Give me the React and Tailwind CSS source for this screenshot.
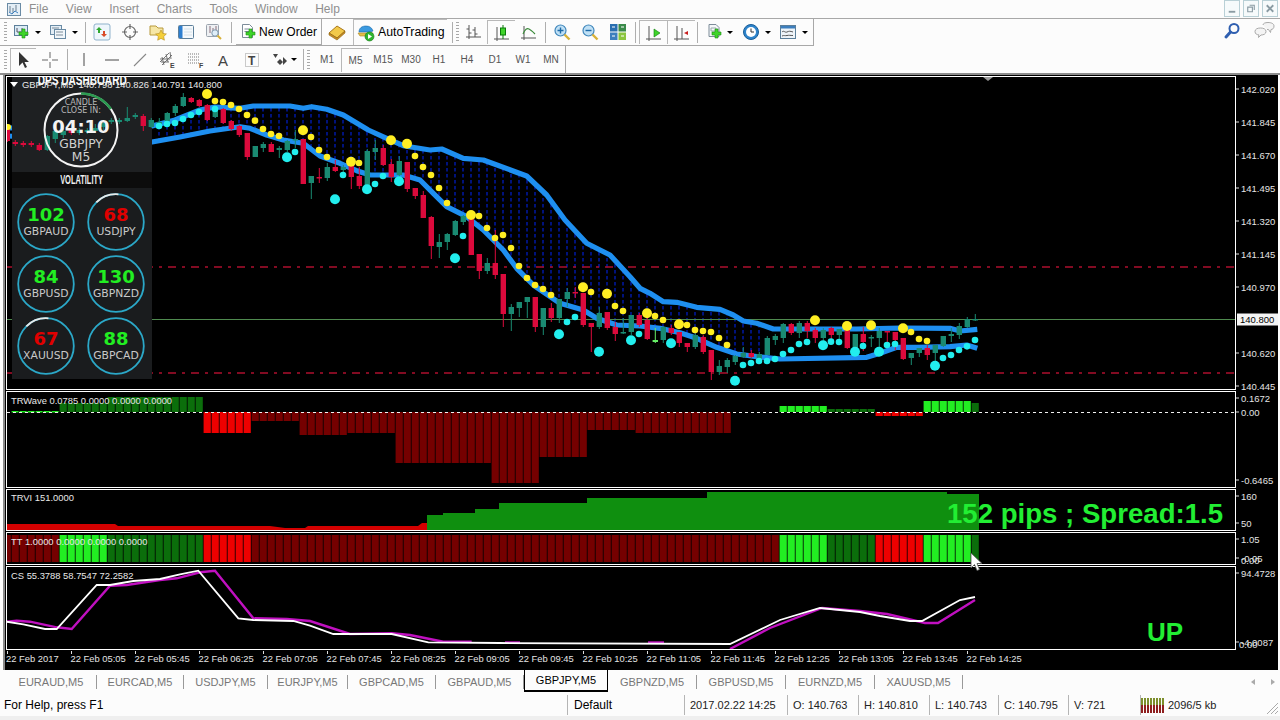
// App.jsx - MT4 terminal screenshot
const z4 = (pts) => pts.map(([x, y]) => [240 + x / 3, 80 + y / 3]);
const z5 = (pts) => pts.map(([x, y]) => [640 + x / 3, 260 + y / 3]);
const toPath = (pts) => pts.map(([x, y]) => `${x.toFixed(1)},${y.toFixed(1)}`).join(" ");

// body top, body bottom, wick top, wick bottom, colour - one per bar, 8px apart
const candles = [
  [126,141,125,142,"r"],[142,144,140,146,"r"],[143,145,141,147,"r"],[143,145,141,147,"r"],[145,150,143,151,"r"],
  [136,150,135,151,"g"],[131,139,130,143,"g"],[131,135,128,138,"g"],[129,133,128,135,"r"],[130,133,128,135,"g"],
  [130,132,128,134,"g"],[128,131,124,133,"g"],[123,127,120,130,"g"],[120,122,118,124,"g"],[120,122,118,124,"g"],
  [118,121,107,122,"g"],[115,117,113,119,"g"],[116,126,114,131,"r"],[120,127,118,128,"g"],[122,126,118,128,"g"],
  [113,121,112,125,"g"],[106,113,104,116,"g"],[97,106,93,107,"g"],[98,102,97,103,"r"],[100,106,99,107,"r"],
  [105,120,104,121,"r"],[109,117,108,118,"g"],[109,123,108,124,"r"],[121,129,120,131,"r"],[126,135,125,137,"r"],
  [133,157,133,160,"r"],[146,157,146,157,"g"],[144,148,142,152,"g"],[144,152,142,152,"r"],[148,150,146,158,"g"],
  [141,150,140,152,"g"],[139,140,130,148,"g"],[139,184,139,184,"r"],[176,183,176,199,"g"],[177,178,168,183,"r"],
  [167,178,163,181,"g"],[167,171,160,172,"r"],[167,170,165,178,"g"],[165,177,165,189,"r"],[176,186,167,189,"r"],
  [151,186,149,186,"g"],[148,152,140,160,"g"],[148,165,145,166,"r"],[164,177,159,182,"r"],[161,175,156,179,"g"],
  [162,189,162,192,"r"],[188,196,188,199,"r"],[195,218,191,218,"r"],[217,246,216,259,"r"],[242,247,234,258,"g"],
  [234,242,233,250,"g"],[221,235,220,236,"g"],[216,222,215,225,"g"],[218,255,212,255,"r"],[254,271,254,279,"r"],
  [263,271,258,274,"g"],[263,275,230,279,"r"],[274,314,274,327,"r"],[307,314,304,331,"g"],[302,308,302,317,"g"],
  [297,302,297,318,"g"],[297,327,297,332,"r"],[308,327,308,335,"g"],[308,318,303,322,"r"],[299,318,299,323,"g"],
  [292,299,288,307,"g"],[292,293,287,298,"r"],[293,325,293,327,"r"],[323,327,323,352,"r"],[313,327,307,329,"g"],
  [312,328,312,330,"r"],[327,334,322,341,"r"],[332,333,318,334,"g"],[315,332,315,335,"g"],[315,325,313,327,"r"],
  [320,339,313,340,"r"],[340,342,328,343,"l"],[327,340,326,343,"g"],[328,333,325,335,"r"],[332,343,332,347,"r"],
  [343,347,343,352,"r"],[335,347,332,349,"g"],[337,352,335,354,"r"],[350,372,350,380,"r"],[366,372,360,375,"g"],
  [360,367,358,373,"g"],[356,362,355,365,"g"],[353,357,347,358,"g"],[353,357,350,358,"r"],[354,363,352,364,"g"],
  [338,355,336,355,"g"],[336,340,334,345,"g"],[324,338,323,343,"g"],[324,333,323,335,"r"],[323,333,321,338,"g"],
  [323,331,321,338,"r"],[330,338,328,343,"r"],[330,338,328,348,"g"],[328,335,327,343,"r"],[329,335,329,340,"g"],
  [330,348,330,349,"r"],[334,348,334,353,"g"],[334,342,327,351,"r"],[337,338,335,347,"g"],[331,338,328,347,"g"],
  [331,332,331,343,"r"],[332,340,332,350,"r"],[338,359,338,360,"r"],[353,358,353,365,"g"],[348,353,348,357,"g"],
  [348,355,345,360,"r"],[345,353,345,366,"g"],[336,346,336,347,"g"],[334,336,328,342,"g"],[326,335,323,339,"g"],
  [319,327,317,328,"g"],[319,320,314,321,"g"],
];
const candleColor = { r: "#dc0a3c", g: "#1a8a72", l: "#66ee66" };

const upperBand = [
  [7,128],[152,126],[175,120],[200,110],[215,107],
  ...z4([[0,85],[40,78],[150,78],[190,85],[215,80],[260,88],[310,105],[385,150],[440,175],[490,197],[570,210],[605,207],[670,235],[730,240],[860,288],[920,345],[975,420],[1040,490],[1110,525],[1170,590]]),
  ...z5([[0,85],[30,100],[70,125],[110,127],[170,142],[240,148],[280,165],[310,183],[350,190],[400,207],[650,207],[780,204],[930,205],[960,213],[1012,208]]),
];
const lowerBand = [
  [7,136],[152,142],[180,137],[210,131],
  ...z4([[0,140],[30,145],[80,165],[130,180],[190,190],[240,228],[300,250],[350,272],[390,285],[490,285],[540,300],[580,340],[620,380],[680,410],[730,450],[790,510],[830,565],[880,615],[960,670],[1030,690],[1070,715],[1130,735]]),
  ...z5([[0,198],[60,205],[120,218],[170,235],[230,262],[290,282],[350,290],[420,297],[680,292],[720,280],[770,262],[830,262],[930,260],[980,255],[1012,265]]),
];

const yellowSmall = [
  [215,101],[223,102],[231,105],[239,109],
  ...z4([[21,105],[45,122],[69,147],[93,162],[117,168],[213,171],[237,210],[261,231],[357,249],[525,228],[549,261],[573,285],[597,324],[621,369],[717,408],[741,444],[765,474],[789,465],[813,504],[837,558],[861,594],[885,615],[909,627],[933,645],[1053,636],[1125,678],[1149,693]]),
  ...z5([[45,168],[69,180],[141,195],[165,210],[189,213],[213,216],[237,234],[261,255],[813,216],[837,237],[861,243]]),
];
const yellowBig = [
  [207,94],
  ...z4([[189,151],[333,245],[453,181],[501,191],[693,405],[1029,622],[1101,641]]),
  ...z5([[21,160],[117,193],[525,181],[621,198],[693,196],[789,205]]),
];
const cyanSmall = [
  [159,126],[167,124],[175,123],[183,119],[191,115],[199,112],[215,109],
  ...z4([[165,216],[309,285],[405,312],[429,288],[669,468],[981,726],[1005,711],[1197,762]]),
  ...z5([[309,315],[333,309],[357,303],[381,303],[405,297],[429,282],[453,270],[477,252],[501,246],[573,245],[597,246],[669,258],[741,255],[765,252],[909,294],[933,285],[957,270],[981,259],[1005,240]]),
];
const cyanBig = [
  ...z4([[141,232],[285,358],[381,328],[477,304],[645,535],[957,763],[1077,815],[1173,781]]),
  ...z5([[93,250],[285,362],[549,256],[645,275],[717,275],[885,317]]),
];

const BG = "#22ee22", DG = "#0b6e0b", BR = "#ee0000", DR = "#750000";
const barX = (i) => 3.6 + 8 * i;
const range = (a, b) => Array.from({ length: b - a + 1 }, (_, k) => a + k);

// TRWave histogram: bar range, top, bottom, colour
const waveRuns = [
  [7, 12, 403, 412, DG], [13, 24, 397, 412, DG], [25, 30, 412, 433, BR], [31, 36, 412, 421, DR],
  [37, 42, 412, 435, DR], [43, 48, 412, 433, DR], [49, 60, 412, 463, DR], [61, 66, 412, 483, DR],
  [67, 72, 412, 457, DR], [73, 78, 412, 430, DR], [79, 90, 412, 433, DR], [97, 102, 406, 412, BG],
  [103, 108, 409, 412, DG], [109, 114, 412, 416, BR], [115, 120, 401, 412, BG], [121, 121, 403, 412, DG],
];
const ttRuns = [
  [0, 6, DR], [7, 12, BG], [13, 24, DG], [25, 30, BR], [31, 96, DR],
  [97, 102, BG], [103, 108, DG], [109, 114, BR], [115, 120, BG], [121, 121, DG],
];

const csWhite = [
  ...[[20,170],[70,178],[135,192],[170,192],[290,60],[330,60],[400,48],[480,42],[540,28],[595,17],[715,160],[760,165],[880,168],[930,182],[1000,207],[1175,207],[1285,232],[1500,234]].map(([x, y]) => [x / 3, 565 + y / 3]),
  [730,644],[780,620],[820,608],[860,612],[880,616],[910,621],[922,621],[960,600],[975,597],
];
const csPurple = [
  [...[[20,170],[50,167],[90,170],[170,187],[215,192],[330,62],[380,60],[480,45],[530,40],[600,22],[645,17],[760,160],[860,162],[930,168],[1050,207],[1175,205],[1230,210],[1330,230],[1415,230]].map(([x, y]) => [x / 3, 565 + y / 3])],
  [[505,642.5],[520,642.5]],
  [[648,642.5],[664,642.5]],
  [[730,649],[770,628],[822,608],[860,611],[887,614],[925,623],[938,623],[975,600]],
];

const timeLabels = ["05:05","05:45","06:25","07:05","07:45","08:25","09:05","09:45","10:25","11:05","11:45","12:25","13:05","13:45","14:25"];
const priceLabels = [["142.020",89],["141.845",122],["141.670",155],["141.495",188],["141.320",221],["141.145",254],["140.970",287],["140.620",353],["140.445",386]];

const arc = (c, r, a0, a1) => {
  const pt = (a) => [c + r * Math.sin((a * Math.PI) / 180), c - r * Math.cos((a * Math.PI) / 180)];
  const [x0, y0] = pt(a0);
  const [x1, y1] = pt(a1);
  return `M${x0} ${y0} A${r} ${r} 0 0 1 ${x1} ${y1}`;
};

function Candles({ from = 0, to = candles.length - 1 }) {
  return (
    <>
      {range(from, to).map((i) => {
        const [t, b, wt, wb, c] = candles[i];
        const x = 7.3 + 8 * i;
        return (
          <g key={i} fill={candleColor[c]}>
            <rect x={x - 0.5} y={wt} width="1" height={wb - wt} />
            <rect x={x - 2.7} y={t} width="5.4" height={Math.max(b - t, 1.5)} />
          </g>
        );
      })}
    </>
  );
}

function Pane({ className, top, height, axis, overlay, children }) {
  return (
    <div className={`flex shrink-0 ${className}`}>
      <div className="relative w-[1230px] border border-white overflow-hidden">
        <svg className="block w-full h-full" viewBox={`7 ${top + 1} 1228 ${height - 2}`}>
          {children}
        </svg>
        {overlay}
      </div>
      <svg className="block w-[42px] h-full overflow-visible" viewBox={`1236 ${top} 42 ${height}`}>
        {axis}
      </svg>
    </div>
  );
}

function AxisLabel({ y, children }) {
  return (
    <g>
      <rect x="1236" y={y - 0.5} width="3" height="1" fill="#ddd" />
      <text x="1241" y={y + 3.5} fontSize="9.5" fill="#e4e4e4">{children}</text>
    </g>
  );
}

function Gauge({ value, label, color, spent }) {
  return (
    <div className="relative w-[58px] h-[58px] flex flex-col items-center justify-center">
      <svg className="absolute inset-0" viewBox="0 0 58 58" fill="none">
        <circle cx="29" cy="29" r="27.8" stroke="#2ba8c8" strokeWidth="1.8" />
        {spent && <path d={arc(29, 27.8, -45, 5)} stroke="#e8e8e8" strokeWidth="1.8" />}
      </svg>
      <div className={`font-['DejaVu_Sans',sans-serif] font-bold text-[18px] leading-[20px] -mt-px ${color}`}>{value}</div>
      <div className="font-['DejaVu_Sans',sans-serif] text-[10.8px] leading-[13px] text-[#c8c8c8]">{label}</div>
    </div>
  );
}

function DashPanel() {
  return (
    <div className="absolute left-[5px] top-0 w-[140px] flex flex-col">
      <div className="relative h-[95px] bg-[#1e2022] overflow-hidden flex flex-col items-center">
        <svg className="absolute inset-0 w-full h-full" viewBox="12 77 140 95">
          <Candles from={1} to={18} />
        </svg>
        <div className="relative h-[16px] -mt-[5px] font-bold text-[15px] leading-[16px] text-white scale-x-[0.67] whitespace-nowrap">DPS DASHBOARD</div>
        <div className="relative w-[76px] h-[76px] mt-[4px] -ml-[2px] flex flex-col items-center font-['DejaVu_Sans',sans-serif]">
          <svg className="absolute inset-0" viewBox="0 0 76 76" fill="none">
            <circle cx="38" cy="38" r="36.5" stroke="#f4f4f4" strokeWidth="2" />
            <path d={arc(38, 36.5, 0, 55)} stroke="#2b9a50" strokeWidth="2.5" />
          </svg>
          <div className="relative mt-[7px] text-[8px] leading-[8px] text-[#b8b8b8] text-center">CANDLE<br />CLOSE IN:</div>
          <div className="relative text-[18px] leading-[19px] mt-[2px] font-bold text-[#f4f4f4]">04:10</div>
          <div className="relative text-[12.3px] leading-[13px] mt-[2px] text-[#d0d0d0] text-center">GBPJPY<br />M5</div>
        </div>
      </div>
      <div className="h-[16px] bg-[#0c0c0c] flex items-center justify-center">
        <span className="font-bold text-[12px] text-[#eee] scale-x-[0.62] whitespace-nowrap">VOLATILITY</span>
      </div>
      <div className="h-[191px] bg-[#1a1c1e] grid grid-cols-[58px_58px] gap-x-[12px] gap-y-[4px] content-start pl-[5px] pt-[5px]">
        <Gauge value="102" label="GBPAUD" color="text-[#22ee22]" />
        <Gauge value="68" label="USDJPY" color="text-[#e00000]" spent />
        <Gauge value="84" label="GBPUSD" color="text-[#22ee22]" />
        <Gauge value="130" label="GBPNZD" color="text-[#22ee22]" />
        <Gauge value="67" label="XAUUSD" color="text-[#e00000]" spent />
        <Gauge value="88" label="GBPCAD" color="text-[#22ee22]" />
      </div>
    </div>
  );
}

function MainChart() {
  const bandArea = toPath([...upperBand, ...[...lowerBand].reverse()]);
  return (
    <Pane
      className="h-[314px]"
      top={76}
      height={314}
      overlay={
        <>
          <DashPanel />
          <div className="absolute left-[3px] top-[2px] flex items-center gap-[3px] text-[9.4px] leading-[11px] text-[#e8e8e8] whitespace-nowrap">
            <span className="w-0 h-0 border-x-[4px] border-x-transparent border-t-[5px] border-t-white" />
            <span className="ml-[1px]">GBPJPY,M5 &nbsp;140.798 140.826 140.791 140.800</span>
          </div>
        </>
      }
      axis={
        <>
          {priceLabels.map(([t, y]) => <AxisLabel key={t} y={y}>{t}</AxisLabel>)}
          <rect x="1237" y="313.5" width="41" height="12" fill="#f4f4f4" />
          <text x="1240" y="323" fontSize="9.5" fill="#000">140.800</text>
        </>
      }
    >
      <defs>
        <pattern id="cloud" x="3" y="0" width="8" height="6" patternUnits="userSpaceOnUse">
          <rect x="3" y="0" width="2" height="3.5" fill="#00127c" />
        </pattern>
        <clipPath id="cloudClip"><rect x="7" y="76" width="757" height="300" /></clipPath>
      </defs>
      <polygon points={bandArea} fill="url(#cloud)" clipPath="url(#cloudClip)" />
      <line x1="7" x2="1235" y1="267" y2="267" stroke="#ad0f2e" strokeWidth="1.5" strokeDasharray="8 6 3 6" />
      <line x1="7" x2="1235" y1="373" y2="373" stroke="#ad0f2e" strokeWidth="1.5" strokeDasharray="8 6 3 6" />
      <line x1="7" x2="1235" y1="319.5" y2="319.5" stroke="#4f8a4f" strokeWidth="1" />
      <polygon points="983,77 993,77 988,81" fill="#9a9a9a" />
      <polyline points={toPath(lowerBand)} fill="none" stroke="#1e8ff0" strokeWidth="5.2" strokeLinejoin="round" />
      <polyline points={toPath(upperBand)} fill="none" stroke="#1e8ff0" strokeWidth="5.2" strokeLinejoin="round" />
      <Candles />
      {yellowSmall.map(([x, y], i) => <circle key={i} cx={x} cy={y} r="3.3" fill="#ffee22" />)}
      {yellowBig.map(([x, y], i) => <circle key={i} cx={x} cy={y} r="5" fill="#ffee22" />)}
      {cyanSmall.map(([x, y], i) => <circle key={i} cx={x} cy={y} r="3.3" fill="#22eeee" />)}
      {cyanBig.map(([x, y], i) => <circle key={i} cx={x} cy={y} r="5" fill="#22eeee" />)}
      <circle cx="8" cy="127" r="3" fill="#ffee22" />
    </Pane>
  );
}

function WavePane() {
  return (
    <Pane
      className="h-[97px]"
      top={391}
      height={97}
      axis={
        <>
          <AxisLabel y={398}>0.1672</AxisLabel>
          <AxisLabel y={412}>0.00</AxisLabel>
          <AxisLabel y={480}>-0.6465</AxisLabel>
        </>
      }
    >
      {waveRuns.flatMap(([a, b, t, bt, c]) => range(a, b).map((i) => (
        <rect key={i} x={barX(i)} y={t} width="7.2" height={bt - t} fill={c} />
      )))}
      {range(1, 6).map((i) => <rect key={i} x={barX(i)} y="411" width="7" height="1.5" fill={BG} />)}
      <line x1="7" x2="1235" y1="412.5" y2="412.5" stroke="#f0f0f0" strokeDasharray="3 3" />
      <text x="11" y="404" fontSize="9.4" fill="#e8e8e8">TRWave 0.0785 0.0000 0.0000 0.0000</text>
    </Pane>
  );
}

function ViPane() {
  return (
    <Pane
      className="h-[42px]"
      top={489}
      height={42}
      axis={
        <>
          <AxisLabel y={496}>160</AxisLabel>
          <AxisLabel y={523}>50</AxisLabel>
        </>
      }
    >
      <polygon points="7,531 7,524 115,524 118,526 270,526 285,528 305,528 308,526 418,526 422,523 427,523 427,531" fill="#d40000" />
      <polygon points="427,531 427,515 443,515 443,513 475,513 475,509 499,509 499,503 587,503 587,498 707,498 707,492 947,492 947,494 979,494 979,531" fill="#0f8f0f" />
      <text x="11" y="501" fontSize="9.4" fill="#e8e8e8">TRVI 151.0000</text>
      <text x="947" y="523" fontSize="27.6" fontWeight="bold" fill="#22ee33">152 pips ; Spread:1.5</text>
    </Pane>
  );
}

function TtPane() {
  return (
    <Pane
      className="h-[33px]"
      top={532}
      height={33}
      axis={
        <>
          <AxisLabel y={539}>1.05</AxisLabel>
          <AxisLabel y={558}>-0.05</AxisLabel>
          <text x="1241" y="564" fontSize="9.5" fill="#e4e4e4">0.00</text>
        </>
      }
    >
      {ttRuns.flatMap(([a, b, c]) => range(a, b).map((i) => (
        <rect key={i} x={barX(i)} y="535" width="7.2" height="27" fill={c} />
      )))}
      <text x="11" y="545" fontSize="9.4" fill="#e8e8e8">TT 1.0000 0.0000 0.0000 0.0000</text>
    </Pane>
  );
}

function CsPane() {
  return (
    <Pane
      className="h-[84px]"
      top={566}
      height={84}
      axis={
        <>
          <AxisLabel y={573}>94.4728</AxisLabel>
          <AxisLabel y={642}>-4.0087</AxisLabel>
          <text x="1239" y="648" fontSize="9.5" fill="#e4e4e4">0.00</text>
        </>
      }
    >
      {csPurple.map((seg, i) => (
        <polyline key={i} points={toPath(seg)} fill="none" stroke="#c010c0" strokeWidth="2.4" />
      ))}
      <polyline points={toPath(csWhite)} fill="none" stroke="#fff" strokeWidth="1.8" />
      <text x="11" y="579" fontSize="9.4" fill="#e8e8e8">CS 55.3788 58.7547 72.2582</text>
      <text x="1147" y="641" fontSize="26" fontWeight="bold" fill="#22ee33">UP</text>
    </Pane>
  );
}

function TimeAxis() {
  return (
    <svg className="block w-[1272px] h-[19px] shrink-0" viewBox="6 651 1272 19">
      <rect x="7" y="651" width="1" height="3" fill="#ddd" />
      <text x="6" y="662" fontSize="9.4" fill="#e4e4e4">22 Feb 2017</text>
      {timeLabels.map((t, i) => (
        <g key={t}>
          <rect x={71 + 64 * i} y="651" width="1" height="3" fill="#ddd" />
          <text x={70.5 + 64 * i} y="662" fontSize="9.4" fill="#e4e4e4">22 Feb {t}</text>
        </g>
      ))}
    </svg>
  );
}

/* toolbar pieces */
const Ic = ({ children, size = 18 }) => (
  <svg width={size} height={size} viewBox="0 0 18 18" fill="none">{children}</svg>
);
const GreenPlus = ({ x = 9, y = 9 }) => (
  <path d={`M${x + 3} ${y}h3v3h3v3h-3v3h-3v-3h-3v-3h3z`} fill="#3fd42a" stroke="#1b8f16" strokeWidth=".6" />
);

const icons = {
  newChart: (
    <Ic><rect x="1.5" y="2.5" width="13" height="10" fill="#dcebf5" stroke="#5c7f9a" /><path d="M4 5v4M4 9h5M9 5v3" stroke="#556" /><GreenPlus x={6} y={6} /></Ic>
  ),
  profiles: (
    <Ic><rect x="1.5" y="2.5" width="11" height="9" fill="#e4eef6" stroke="#6a8ba5" /><rect x="5.5" y="6.5" width="11" height="9" fill="#f2f7fb" stroke="#6a8ba5" /><path d="M3 5h7M7 9h7M7 12h7" stroke="#7d8c99" /></Ic>
  ),
  market: (
    <Ic><rect x="1" y="1" width="16" height="16" rx="2" fill="#eef6fc" stroke="#8fb2cc" /><path d="M6 4l3 3H7v3H5V7H3z" fill="#2fa82f" /><path d="M11 14l-3-3h2V8h2v3h2z" fill="#d94a2a" /></Ic>
  ),
  navigator: (
    <Ic><circle cx="9" cy="9" r="5.5" stroke="#666" strokeWidth="1.2" /><path d="M9 1v5M9 12v5M1 9h5M12 9h5" stroke="#666" strokeWidth="1.2" /></Ic>
  ),
  favorites: (
    <Ic><path d="M1 3h6l2 2h5v7H1z" fill="#f6e7a6" stroke="#b89a3c" /><path d="M12 7l1.7 3.4 3.7.5-2.7 2.6.7 3.7-3.4-1.8-3.3 1.8.6-3.7-2.7-2.6 3.8-.5z" fill="#f4cf3a" stroke="#b58c1c" strokeWidth=".6" /></Ic>
  ),
  terminal: (
    <Ic><rect x="1.5" y="2.5" width="15" height="13" rx="1" fill="#f5f9fc" stroke="#5c7f9a" /><rect x="2" y="3" width="3.5" height="12" fill="#2e7fd0" /><path d="M7 6h8M7 9h8M7 12h8" stroke="#d5e0e8" /></Ic>
  ),
  tester: (
    <Ic><rect x="1.5" y="1.5" width="12" height="12" rx="1" fill="#eef0f3" stroke="#9aa3ad" /><path d="M5 3v7M8 5v7M11 3v5" stroke="#8a6f7a" /><circle cx="10" cy="10" r="3.2" fill="#dfeef8" stroke="#7f98ad" /><path d="M12.5 12.5l3.5 3.5" stroke="#d8b23a" strokeWidth="2" /></Ic>
  ),
  order: (
    <Ic><path d="M2.5 1.5h7l3 3v10h-10z" fill="#fff" stroke="#7d8c99" /><path d="M4.5 6h5M4.5 8.5h5" stroke="#7d8c99" /><GreenPlus x={6} y={6} /></Ic>
  ),
  editor: (
    <Ic><path d="M1 10l8-7 8 5-8 7z" fill="#f2c94a" stroke="#a9781c" /><path d="M1 10v2l8 5 8-7V8l-8 7z" fill="#c98e24" stroke="#8f6414" strokeWidth=".6" /></Ic>
  ),
  auto: (
    <Ic><path d="M2 8c0-4 3-6 7-6s6 2 7 5l-3 1H4z" fill="#3b9ae0" stroke="#1d6aa8" strokeWidth=".6" /><path d="M1 9h15l-2 3H3z" fill="#e5c04a" stroke="#a88520" strokeWidth=".6" /><circle cx="12.5" cy="12.5" r="4.5" fill="#2fb52f" stroke="#167a16" strokeWidth=".6" /><path d="M11 10l4 2.5-4 2.5z" fill="#fff" /></Ic>
  ),
  bars: (
    <Ic><path d="M1 15h15M4 3v14M4 7H1.5M4 11h2.5M10 5v10M10 8H7.5M10 12h2.5" stroke="#555" transform="translate(1 -1)" /></Ic>
  ),
  candle: (
    <Ic><path d="M1 15h15M4 3v14" stroke="#555" /><path d="M10 1v14" stroke="#0a7a0a" /><rect x="7.5" y="4" width="5" height="7" fill="#3fd42a" stroke="#0a7a0a" /></Ic>
  ),
  line: (
    <Ic><path d="M1 15h15M4 3v14" stroke="#555" /><path d="M3 11c2-5 4-6 6-5s4 3 6 5" stroke="#3a8a3a" strokeWidth="1.1" /></Ic>
  ),
  zoomIn: (
    <Ic><circle cx="7.5" cy="7.5" r="5.5" fill="#bfe0f5" stroke="#3f86bb" strokeWidth="1.2" /><path d="M4.5 7.5h6M7.5 4.5v6" stroke="#1d6aa8" strokeWidth="1.4" /><path d="M11.5 11.5l5 5" stroke="#d8b23a" strokeWidth="2.4" /></Ic>
  ),
  zoomOut: (
    <Ic><circle cx="7.5" cy="7.5" r="5.5" fill="#bfe0f5" stroke="#3f86bb" strokeWidth="1.2" /><path d="M4.5 7.5h6" stroke="#1d6aa8" strokeWidth="1.4" /><path d="M11.5 11.5l5 5" stroke="#d8b23a" strokeWidth="2.4" /></Ic>
  ),
  tile: (
    <Ic><rect x="1" y="1" width="7.5" height="7.5" fill="#2a6fb0" /><rect x="9.5" y="1" width="7.5" height="7.5" fill="#3a8a4a" /><rect x="1" y="9.5" width="7.5" height="7.5" fill="#3d7fbe" /><rect x="9.5" y="9.5" width="7.5" height="7.5" fill="#8cc63f" /><path d="M3 4h3M12 4h3M3 13h3M12 13h3" stroke="#fff" /></Ic>
  ),
  scroll: (
    <Ic><path d="M1 15h15M4 2v15" stroke="#555" /><path d="M9 5l6 4-6 4z" fill="#3fd42a" stroke="#0a7a0a" strokeWidth=".6" /></Ic>
  ),
  shift: (
    <Ic><path d="M1 15h15M4 2v15M9 4v11" stroke="#555" /><path d="M11 9l4-2v4z" fill="#c81e1e" /></Ic>
  ),
  newDoc: (
    <Ic><path d="M3 1.5h7l3 3v9H3z" fill="#f5f7f9" stroke="#7d8c99" /><path d="M5 5h5v3H5z" fill="none" stroke="#9aa" /><GreenPlus x={6} y={6} /></Ic>
  ),
  clock: (
    <Ic><circle cx="9" cy="9" r="7.5" fill="#2e84cc" stroke="#1a5e98" /><circle cx="9" cy="9" r="5" fill="#fff" /><path d="M9 5.5V9h3" stroke="#333" /></Ic>
  ),
  template: (
    <Ic><rect x="1.5" y="2.5" width="15" height="13" fill="#eef4f9" stroke="#5c7f9a" /><rect x="2" y="3" width="14" height="2.5" fill="#3d7fbe" /><path d="M3 9c2-2 3 1 5 0s3-1 6 0M3 13c2-1 3 0 5-.5s3 0 6 0" stroke="#555" /></Ic>
  ),
  arrow: (
    <Ic><path d="M4 1v14l3.500-3.500L10 17l2-1-2.500-5H14z" fill="#333" /></Ic>
  ),
  cross: (
    <Ic><path d="M9 1v6M9 11v6M1 9h6M11 9h6" stroke="#666" /></Ic>
  ),
  vline: <Ic><path d="M9 2v13" stroke="#666" strokeWidth="1.2" /></Ic>,
  hline: <Ic><path d="M2 9h14" stroke="#666" strokeWidth="1.2" /></Ic>,
  trend: <Ic><path d="M3 15L15 3" stroke="#888" strokeWidth="1.1" /></Ic>,
  channel: (
    <Ic><path d="M1 11L10 2M3 14L13 4M3 6l2 8M7 3l2 8M11 1l1 7M1 8h10M2 11h8" stroke="#666" strokeWidth=".9" /><text x="11" y="17" fontSize="7" fontWeight="bold" fill="#444">E</text></Ic>
  ),
  fibo: (
    <Ic><path d="M1 3h12M1 6h12M1 9h12M1 12h12" stroke="#777" strokeDasharray="1 1" /><text x="12" y="17" fontSize="7" fontWeight="bold" fill="#444">F</text></Ic>
  ),
  letterA: <Ic><text x="3" y="15" fontSize="15" fill="#444">A</text></Ic>,
  letterT: (
    <Ic><rect x="2.5" y="2.5" width="13" height="13" stroke="#999" strokeDasharray="1 1" /><text x="5" y="14" fontSize="12" fontWeight="bold" fill="#444">T</text></Ic>
  ),
  marks: (
    <Ic><path d="M2 3l5 0-2.500 4z" fill="#444" /><path d="M9 8l3 3-3 3-3-3z" fill="#444" /><path d="M12 8l4 4-4 4z" fill="#444" transform="translate(0 -2)" /></Ic>
  ),
};

function Btn({ icon, className = "w-[28px]", pressed }) {
  return (
    <div className={`h-[24px] flex items-center justify-center shrink-0 ${className} ${pressed ? "border-l border-t border-[#b8b8b8]" : ""}`}>
      {icons[icon]}
    </div>
  );
}
const Drop = ({ className = "w-[6px]" }) => (
  <div className={`flex justify-center shrink-0 ${className}`}>
    <span className="w-0 h-0 border-x-[3px] border-x-transparent border-t-[3px] border-t-black" />
  </div>
);
const Sep = ({ className = "" }) => <div className={`w-px h-[21px] bg-[#aeaeae] shrink-0 ${className}`} />;
const Grip = ({ className = "" }) => (
  <div className={`w-[3px] h-[20px] shrink-0 bg-[repeating-linear-gradient(to_bottom,#a8a8a8_0,#a8a8a8_1px,transparent_1px,transparent_3px)] ${className}`} />
);

function ToolbarTop() {
  return (
    <div className="flex items-center w-[814px] h-[27px] shrink-0 border-b border-r border-[#a8a8a8] pl-[4px]">
      <Grip />
      <Btn icon="newChart" className="w-[26px] ml-[2px]" />
      <Drop />
      <Btn icon="profiles" className="w-[28px] ml-[3px]" />
      <Drop />
      <Sep className="ml-[7px]" />
      <Btn icon="market" className="w-[28px] ml-[2px]" />
      <Btn icon="navigator" />
      <Btn icon="favorites" />
      <Btn icon="terminal" />
      <Btn icon="tester" />
      <Sep className="ml-[3px]" />
      <div className="ml-[4px] w-[86px] h-[26px] flex items-center pl-[4px] gap-px border-r border-b border-[#aaa] shrink-0 whitespace-nowrap">
        {icons.order}
        <span className="text-[12px] text-black">New Order</span>
      </div>
      <Btn icon="editor" className="w-[28px] ml-px" />
      <div className="ml-[2px] w-[94px] h-[26px] flex items-center pl-[3px] gap-[3px] border-l border-t border-[#bbb] shrink-0 whitespace-nowrap">
        {icons.auto}
        <span className="text-[12.3px] text-black">AutoTrading</span>
      </div>
      <Sep className="ml-[5px]" />
      <Grip className="ml-[3px]" />
      <Btn icon="bars" />
      <Btn icon="candle" pressed />
      <Btn icon="line" />
      <Sep className="ml-[2px]" />
      <Btn icon="zoomIn" className="w-[28px] ml-[2px]" />
      <Btn icon="zoomOut" />
      <Btn icon="tile" />
      <Sep className="ml-[3px]" />
      <Btn icon="scroll" className="w-[28px] ml-[3px]" pressed />
      <Btn icon="shift" pressed />
      <Sep className="ml-[2px]" />
      <Btn icon="newDoc" className="w-[24px] ml-[5px]" />
      <Drop />
      <Btn icon="clock" className="w-[28px] ml-[4px]" />
      <Drop />
      <Btn icon="template" className="w-[28px] ml-[3px]" />
      <Drop />
    </div>
  );
}

const periods = ["M1", "M5", "M15", "M30", "H1", "H4", "D1", "W1", "MN"];

function ToolbarBottom() {
  return (
    <div className="flex items-center w-[566px] h-[27px] shrink-0 border-r border-[#a8a8a8] pl-[4px]">
      <Grip />
      <Btn icon="arrow" className="w-[26px] ml-[3px]" pressed />
      <Btn icon="cross" />
      <Sep className="ml-[3px]" />
      <Btn icon="vline" className="w-[28px] ml-[2px]" />
      <Btn icon="hline" />
      <Btn icon="trend" />
      <Btn icon="channel" />
      <Btn icon="fibo" />
      <Btn icon="letterA" />
      <Btn icon="letterT" />
      <Btn icon="marks" />
      <Drop className="w-[6px] -ml-[3px]" />
      <Sep className="ml-[6px]" />
      <Grip className="ml-[3px]" />
      <div className="flex ml-[3px]">
        {periods.map((p) => (
          <div key={p} className={`w-[28px] h-[24px] flex items-center justify-center text-[10px] text-[#555] shrink-0 ${p === "M5" ? "border-l border-t border-[#b8b8b8]" : ""}`}>{p}</div>
        ))}
      </div>
    </div>
  );
}

function MenuBar() {
  const items = ["File", "View", "Insert", "Charts", "Tools", "Window", "Help"];
  return (
    <div className="flex items-center h-[19px] shrink-0 border-b border-[#a8a8a8] pl-[6px]">
      <svg width="16" height="16" viewBox="0 0 16 16" fill="none" className="shrink-0 mr-[7px]">
        <rect x="1.5" y="2.5" width="13" height="12" fill="#e4eef6" stroke="#6a8ba5" />
        <path d="M4 5v6M7 7v5M10 4v6" stroke="#6a7f90" />
        <path d="M3 11l3 2 3-3 3 2" stroke="#3d7fbe" />
      </svg>
      <div className="flex gap-[17.5px] text-[12px] text-[#8f8f8f]">
        {items.map((m) => <span key={m}>{m}</span>)}
      </div>
      <div className="ml-auto flex gap-[3px] pr-[2px] h-[17px] -mt-[2px]">
        {[
          <path key="m" d="M4 11h7" stroke="#8a9ba3" strokeWidth="2" />,
          <path key="r" d="M4 6h5v5H4zM6 4h5v5" stroke="#8a9ba3" strokeWidth="1.2" />,
          <path key="c" d="M4 4l7 7M11 4l-7 7" stroke="#8a9ba3" strokeWidth="2" />,
        ].map((g, i) => (
          <div key={i} className="w-[16px] h-[17px] border border-[#b9d0d6] bg-[#f6fafb] flex items-center justify-center">
            <svg width="15" height="15" viewBox="0 0 15 15" fill="none">{g}</svg>
          </div>
        ))}
      </div>
    </div>
  );
}

const tabs = [
  ["EURAUD,M5", "w-[91px]"], ["EURCAD,M5", "w-[87px]"], ["USDJPY,M5", "w-[84px]"], ["EURJPY,M5", "w-[80px]"],
  ["GBPCAD,M5", "w-[88px]"], ["GBPAUD,M5", "w-[88px]"], ["GBPJPY,M5", "w-[84px]"], ["GBPNZD,M5", "w-[89px]"],
  ["GBPUSD,M5", "w-[89px]"], ["EURNZD,M5", "w-[89px]"], ["XAUUSD,M5", "w-[88px]"],
];

function TabBar() {
  return (
    <div className="flex items-start h-[24px] shrink-0 pl-[6px] text-[11px] relative">
      {tabs.map(([t, w]) =>
        t === "GBPJPY,M5" ? (
          <div key={t} className={`${w} h-[22px] border-x border-b-2 border-black text-black flex items-center justify-center shrink-0`}>{t}</div>
        ) : (
          <div key={t} className={`${w} h-[14px] mt-[5px] border-r border-[#999] text-[#777] flex items-center justify-center shrink-0`}>{t}</div>
        )
      )}
      <div className="ml-auto mr-[5px] mt-[9px] flex gap-[16px]">
        <span className="w-0 h-0 border-y-[3px] border-y-transparent border-r-[4px] border-r-[#aaa]" />
        <span className="w-0 h-0 border-y-[3px] border-y-transparent border-l-[4px] border-l-[#aaa]" />
      </div>
    </div>
  );
}

function StatusBar() {
  const cells = [
    ["2017.02.22 14:25", "w-[103px]"], ["O: 140.763", "w-[71px]"], ["H: 140.810", "w-[71px]"],
    ["L: 140.743", "w-[69px]"], ["C: 140.795", "w-[70px]"], ["V: 721", "w-[72px]"],
  ];
  return (
    <div className="flex items-center h-[22px] shrink-0 text-black">
      <div className="w-[567px] pl-[4px] text-[12px] shrink-0">For Help, press F1</div>
      <div className="w-[117px] h-[20px] border-l border-[#b5b5b5] pl-[6px] flex items-center text-[12px] shrink-0">Default</div>
      {cells.map(([c, w]) => (
        <div key={c} className={`${w} h-[20px] border-l border-[#b5b5b5] pl-[5px] flex items-center text-[11px] text-[#222] shrink-0`}>{c}</div>
      ))}
      <div className="h-[20px] border-l border-[#b5b5b5] flex items-center gap-[3px] text-[11px] text-[#222] flex-1">
        <svg width="24" height="18" viewBox="0 0 24 18" className="shrink-0">
          {range(0, 7).map((i) => (
            <g key={i}>
              <rect x={i * 3} y={2} width="2" height="7" fill="#7d8f2c" />
              <rect x={i * 3} y={9} width="2" height="8" fill="#8f1f1f" />
            </g>
          ))}
        </svg>
        <span>2096/5 kb</span>
      </div>
      <svg width="14" height="14" viewBox="0 0 14 14" className="shrink-0 mr-[1px] mt-[6px]">
        <path d="M13 2L2 13M13 6l-7 7M13 10l-3 3" stroke="#aaa" />
      </svg>
    </div>
  );
}

export default function App() {
  return (
    <div className="relative w-[1280px] h-[720px] overflow-hidden flex flex-col bg-[#fcfcfc] font-['Liberation_Sans',sans-serif]">
      <MenuBar />
      <div className="relative">
        <ToolbarTop />
        <ToolbarBottom />
        <div className="absolute right-[4px] top-[3px] flex items-center gap-[13px]">
          <svg width="18" height="18" viewBox="0 0 18 18" fill="none">
            <circle cx="11" cy="6.500" r="4.500" stroke="#2f5fb0" strokeWidth="2" />
            <path d="M7.500 10L3 15" stroke="#2f5fb0" strokeWidth="3" strokeLinecap="round" />
          </svg>
          <svg width="22" height="18" viewBox="0 0 22 18" fill="#f4f4f4" stroke="#aaa">
            <path d="M9 3c0-1.500 2-2.500 5-2.500s6 1 6 3.500-1.500 3.500-3 3.500l-.5 3-2-3H13" />
            <path d="M1 9.500C1 7 3.500 6 6.500 6s5.500 1 5.500 3.500-2.500 3.500-5 3.500l-2.500 2.500.3-2.700C3 12.800 1 12 1 9.500z" />
          </svg>
        </div>
      </div>
      <div className="h-[2px] shrink-0 bg-[#8c8c8c]" />
      <div className="ml-[3px] mr-[2px] h-[595px] shrink-0 border-l-2 border-[#8a8a8a] bg-black pl-px pt-px flex flex-col gap-px">
        <MainChart />
        <WavePane />
        <ViPane />
        <TtPane />
        <CsPane />
        <TimeAxis />
      </div>
      <TabBar />
      <StatusBar />
      <div className="flex-1 bg-[#efefef]" />
      <svg className="absolute left-[970px] top-[552px]" width="14" height="20" viewBox="0 0 14 20">
        <path d="M1 1v15l3.500-3.500 2.500 6 2.500-1-2.500-6H12z" fill="#fff" stroke="#555" strokeWidth=".8" />
      </svg>
    </div>
  );
}
